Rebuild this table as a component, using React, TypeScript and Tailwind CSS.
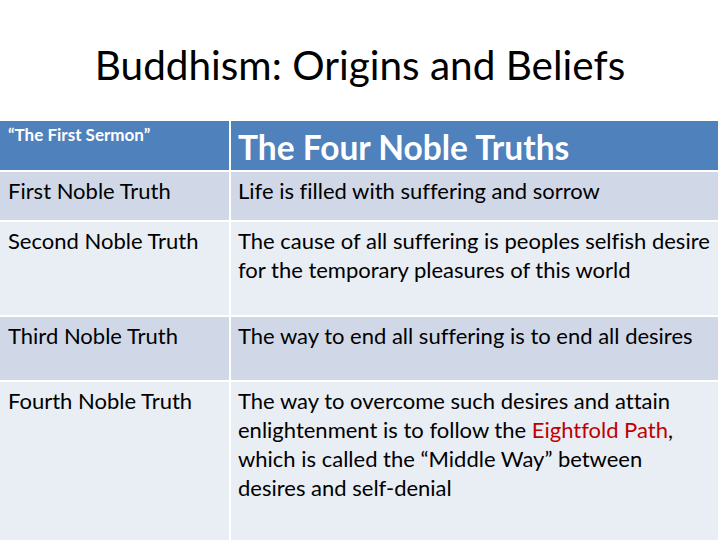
import React from 'react'

const rows = [
  {
    label: 'First Noble Truth',
    text: <>Life is filled with suffering and sorrow</>,
    h: 'h-[48px]',
    bg: 'bg-[#d0d8e8]',
  },
  {
    label: 'Second Noble Truth',
    text: (
      <>
        The cause of all suffering is peoples selfish desire
        <br />
        for the temporary pleasures of this world
      </>
    ),
    h: 'h-[93px]',
    bg: 'bg-[#e9edf4]',
  },
  {
    label: 'Third Noble Truth',
    text: <>The way to end all suffering is to end all desires</>,
    h: 'h-[63px]',
    bg: 'bg-[#d0d8e8]',
  },
  {
    label: 'Fourth Noble Truth',
    text: (
      <>
        The way to overcome such desires and attain
        <br />
        enlightenment is to follow the <span className="text-[#c00000]">Eightfold Path</span>,
        <br />
        which is called the “Middle Way” between
        <br />
        desires and self-denial
      </>
    ),
    h: 'h-[158px]',
    bg: 'bg-[#e9edf4]',
  },
]

export default function App() {
  return (
    <div className="w-[720px] h-[540px] bg-white overflow-hidden font-['Lato',sans-serif] text-black [font-variant-ligatures:none]">
      <h1 className="h-[121px] pt-[41px] text-center text-[40.5px] leading-[48px]">
        Buddhism: Origins and Beliefs
      </h1>

      <div className="flex flex-col gap-[2px] pr-[2px]">
        {/* header */}
        <div className="flex gap-[2px] h-[49px]">
          <div className="w-[229px] bg-[#4f81bd] px-[8px] pt-[4px] text-white font-bold text-[17px] leading-[20px] whitespace-nowrap">
            “The First Sermon”
          </div>
          <div className="flex-1 bg-[#4f81bd] px-[7px] pt-[6px] text-white font-bold text-[33.5px] leading-[40px] whitespace-nowrap">
            The Four Noble Truths
          </div>
        </div>

        {rows.map((r) => (
          <div key={r.label} className={`flex gap-[2px] ${r.h}`}>
            <div className={`w-[229px] ${r.bg} px-[8px] pt-[4px] text-[22px] leading-[29px] whitespace-nowrap`}>
              {r.label}
            </div>
            <div className={`flex-1 ${r.bg} px-[7px] pt-[4px] text-[22px] leading-[29px] whitespace-nowrap`}>
              {r.text}
            </div>
          </div>
        ))}
      </div>
    </div>
  )
}
